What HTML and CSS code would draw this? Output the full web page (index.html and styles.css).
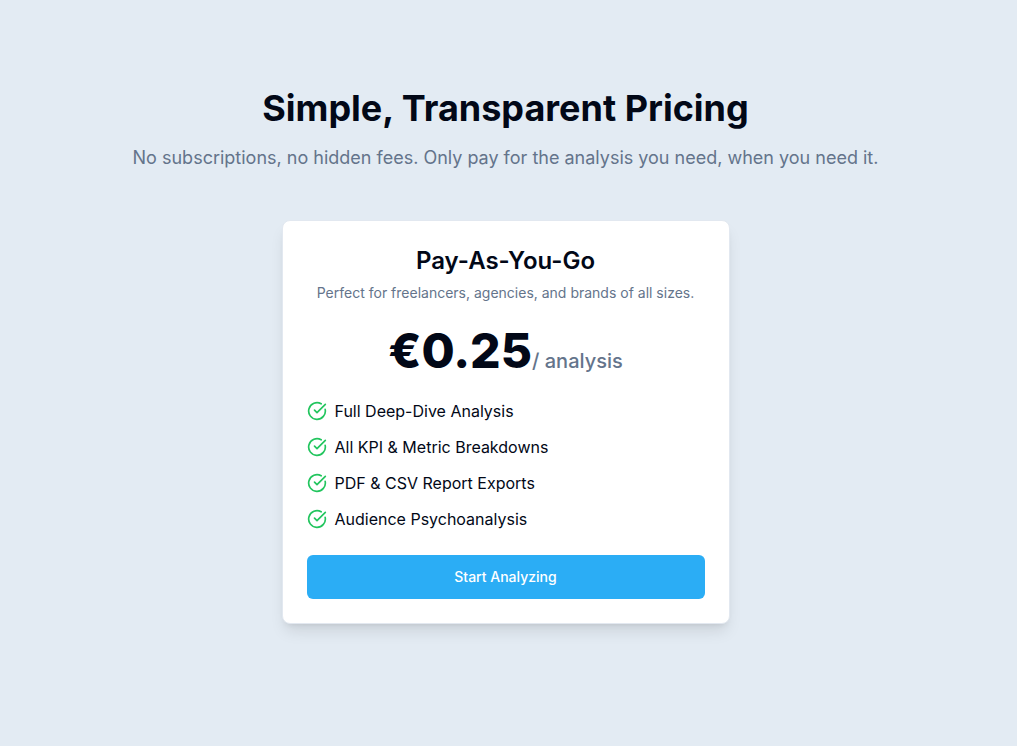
FILE: index.html
```html
<!DOCTYPE html>
<html lang="en">
<head>
  <meta charset="UTF-8">
  <meta name="viewport" content="width=device-width, initial-scale=1.0">
  <title>Pricing</title>
  <link rel="stylesheet" href="styles.css">
</head>
<body>
  <section class="pricing">
    <div class="heading">
      <h1>Simple, Transparent Pricing</h1>
      <p>No subscriptions, no hidden fees. Only pay for the analysis you need, when you need it.</p>
    </div>

    <div class="card">
      <h2>Pay-As-You-Go</h2>
      <p class="description">Perfect for freelancers, agencies, and brands of all sizes.</p>
      <div class="price">
        <span class="amount">€0.25</span><span class="unit">/ analysis</span>
      </div>
      <ul class="features">
        <li>
          <svg class="check" viewBox="0 0 24 24" aria-hidden="true"><path d="M21.801 10A10 10 0 1 1 17 3.335"/><path d="m9 11 3 3L22 4"/></svg>
          <span>Full Deep-Dive Analysis</span>
        </li>
        <li>
          <svg class="check" viewBox="0 0 24 24" aria-hidden="true"><path d="M21.801 10A10 10 0 1 1 17 3.335"/><path d="m9 11 3 3L22 4"/></svg>
          <span>All KPI &amp; Metric Breakdowns</span>
        </li>
        <li>
          <svg class="check" viewBox="0 0 24 24" aria-hidden="true"><path d="M21.801 10A10 10 0 1 1 17 3.335"/><path d="m9 11 3 3L22 4"/></svg>
          <span>PDF &amp; CSV Report Exports</span>
        </li>
        <li>
          <svg class="check" viewBox="0 0 24 24" aria-hidden="true"><path d="M21.801 10A10 10 0 1 1 17 3.335"/><path d="m9 11 3 3L22 4"/></svg>
          <span>Audience Psychoanalysis</span>
        </li>
      </ul>
      <button type="button" class="btn">Start Analyzing</button>
    </div>
  </section>
</body>
</html>
```
FILE: styles.css
```css
* {
  box-sizing: border-box;
  margin: 0;
  padding: 0;
}

body {
  font-family: Inter, sans-serif;
  font-size: 16px;
  line-height: 24px;
  color: #020817;
  background: #e3ebf3;
}

.pricing {
  padding: 88px 38px 96px 32px;
}

.heading {
  text-align: center;
  margin-bottom: 48px;
}

.heading h1 {
  font-size: 36px;
  line-height: 40px;
  font-weight: 700;
}

.heading p {
  margin-top: 16px;
  font-size: 18px;
  line-height: 28px;
  color: #64748b;
}

.card {
  max-width: 448px;
  margin: 0 auto;
  padding: 24px;
  text-align: center;
  background: #fff;
  border: 1px solid #e2e8f0;
  border-radius: 8px;
  box-shadow: 0 10px 15px -3px rgba(0, 0, 0, 0.1), 0 4px 6px -4px rgba(0, 0, 0, 0.1);
}

.card h2 {
  font-size: 24px;
  line-height: 32px;
  font-weight: 600;
}

.description {
  margin-top: 6px;
  font-size: 14px;
  line-height: 20px;
  color: #64748b;
}

.price {
  margin: 24px 0;
}

.amount {
  font-size: 48px;
  line-height: 48px;
  font-weight: 800;
}

.unit {
  font-size: 20px;
  line-height: 28px;
  font-weight: 500;
  color: #64748b;
}

.features {
  display: grid;
  gap: 12px;
  margin-bottom: 24px;
  list-style: none;
}

.features li {
  display: flex;
  align-items: center;
  gap: 8px;
}

.check {
  width: 20px;
  height: 20px;
  fill: none;
  stroke: #22c55e;
  stroke-width: 2;
  stroke-linecap: round;
  stroke-linejoin: round;
}

.btn {
  width: 100%;
  height: 44px;
  font: 500 14px/20px Inter, sans-serif;
  color: #fff;
  background: #2badf5;
  border: none;
  border-radius: 6px;
  cursor: pointer;
}
```
